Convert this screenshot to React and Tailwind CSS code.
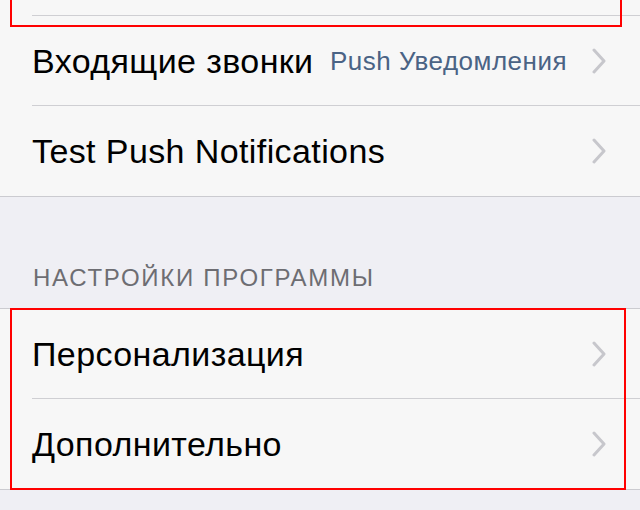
function Chevron() {
  return (
    <svg width="16" height="26" viewBox="0 0 16 26" className="shrink-0">
      <path d="M3 2 L13 13 L3 24" fill="none" stroke="#c7c7cc" strokeWidth="3" strokeLinecap="round" strokeLinejoin="round" />
    </svg>
  )
}

function Row({ title, detail, last }) {
  return (
    <div className="h-[90px] pl-[32px] flex flex-col">
      <div className="flex-1 flex items-center pr-[33px]">
        <span className="text-[34px] text-black leading-none tracking-[0.4px]">{title}</span>
        <div className="flex-1" />
        {detail && (
          <span className="text-[26px] text-[#4a6385] leading-none tracking-[0.5px] mr-[24px]">{detail}</span>
        )}
        <Chevron />
      </div>
      {!last && <div className="h-px bg-[#cfcfd3]" />}
    </div>
  )
}

export default function App() {
  return (
    <div className="w-[640px] h-[510px] overflow-hidden bg-[#efeff4] font-['Liberation_Sans',Arial,sans-serif]">
      <div className="relative bg-[#f7f7f7] border-b border-[#cbcbd0]">
        <div className="h-[16px] pl-[32px] flex flex-col justify-end">
          <div className="h-px bg-[#cfcfd3]" />
        </div>
        <div className="absolute left-[10px] top-[-10px] w-[612px] h-[37px] border-2 border-[#ff0000]" />
        <Row title="Входящие звонки" detail="Push Уведомления" />
        <Row title="Test Push Notifications" last />
      </div>

      <div className="h-[111px] flex items-end pl-[33px] pb-[18px]">
        <span className="text-[24px] text-[#6d6d72] leading-none tracking-[1.7px]">НАСТРОЙКИ ПРОГРАММЫ</span>
      </div>

      <div className="relative bg-[#f7f7f7] border-y border-[#cbcbd0]">
        <Row title="Персонализация" />
        <Row title="Дополнительно" last />
        <div className="absolute left-[10px] top-[-1px] right-[14px] bottom-[-1px] border-2 border-[#ff0000]" />
      </div>
    </div>
  )
}
